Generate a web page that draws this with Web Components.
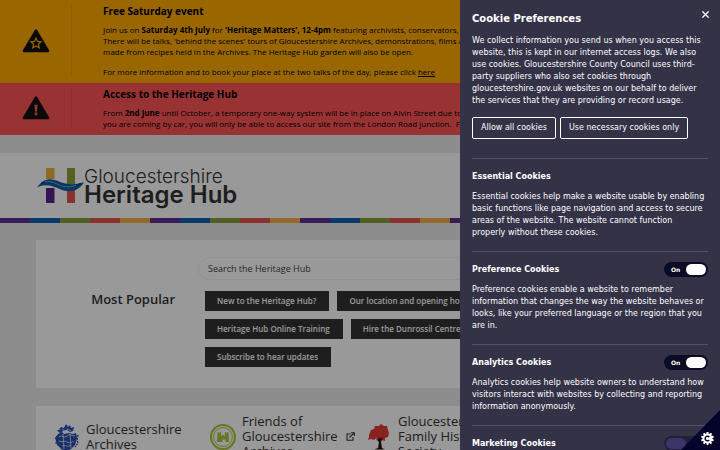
<!DOCTYPE html>
<html lang="en">
<head>
<meta charset="utf-8">
<title>Gloucestershire Heritage Hub</title>
<style>
html{height:100%;overflow:hidden}
body{margin:0;min-height:100%;background:#ececec;font-family:"Open Sans","Liberation Sans",sans-serif;color:#222}
</style>
</head>
<body>
<hub-page></hub-page>
<cookie-panel></cookie-panel>
<script>
class Base extends HTMLElement{
  connectedCallback(){
    if(this.shadowRoot)return;
    this.attachShadow({mode:'open'}).innerHTML='<style>*{box-sizing:border-box}'+this.css()+'</style>'+this.html();
  }
  css(){return ':host{display:block}'}
  html(){return '<slot></slot>'}
}

customElements.define('alert-banner',class extends Base{
  css(){return `
    :host{display:grid;grid-template-columns:72px 1fr;background:var(--tone);padding:4px 0 6px;color:#000}
    .icon{display:grid;place-items:center;border-right:1px solid rgba(0,0,0,.07)}
    svg{width:28px;height:24px;display:block}
    .text{padding-left:31px;min-width:0;overflow:hidden;white-space:nowrap}
    h2{margin:0 0 6px;font-size:10px;line-height:14px;font-weight:700}
    .body{font-size:8px;line-height:11px}`}
  html(){
    const mark=this.getAttribute('icon')==='star'
      ?'<path d="M14 9.2l1.5 3.2 3.6.4-2.7 2.4.8 3.5-3.2-1.8-3.2 1.8.8-3.5-2.7-2.4 3.6-.4z" fill="none" stroke="var(--tone)" stroke-width="1.2"/>'
      :'<path d="M12.4 8.8h3.2l-.5 6.6h-2.2zM12.6 16.6h2.8v2.6h-2.8z" fill="var(--tone)"/>';
    return `<div class="icon"><svg viewBox="0 0 28 24" aria-hidden="true"><path d="M14 1.6L26 22H2z" fill="#111" stroke="#111" stroke-width="2.6" stroke-linejoin="round"/>${mark}</svg></div>
    <div class="text"><h2>${this.getAttribute('heading')}</h2><div class="body"><slot></slot></div></div>`}
});

customElements.define('site-header',class extends Base{
  css(){return `
    :host{display:block;background:#fff;margin-top:18px}
    a{display:flex;padding:15px 36px 14px;color:#333;text-decoration:none;font-family:Inter,"Liberation Sans",sans-serif}
    svg{width:48px;height:36px;flex:none}
    .name{display:grid}
    .a{font-size:19px;line-height:18px;font-weight:300}
    .b{font-size:24px;line-height:18px;font-weight:600}
    .stripe{height:5px;background:repeating-linear-gradient(90deg,#5f2d91 0 30px,#1260b0 30px 60px,#86a03c 60px 90px,#e8584f 90px 120px,#f4b043 120px 150px)}`}
  html(){return `<a href="#home"><svg viewBox="0 0 48 36" aria-hidden="true">
    <path d="M10 0h8.5v11H10z" fill="#eeb13c"/><path d="M31 0h8v16h-8z" fill="#8aa33a"/>
    <path d="M10 20h8.5v15H10z" fill="#5a2391"/><path d="M31 22h8v13h-8z" fill="#e2564d"/>
    <path d="M1 19.5C8 9.5 15 10 23 13.5c8 3.5 16 3.5 25 .8C43 23.5 33 25 25 21.5 16 17.5 9 15.5 1 19.5z" fill="#0f5ea8"/>
    <path d="M5 15.5c8-3 14-1 20 2 7 3 14 1.5 20-2" fill="none" stroke="#0a468a" stroke-width="1.5"/>
    <path d="M9 14c7-1.5 12 2.5 18 4.3 5 1.2 9 .7 13-1" fill="none" stroke="#9cc6ea" stroke-width=".8"/>
    </svg><span class="name"><span class="a">Gloucestershire</span><span class="b">Heritage Hub</span></span></a><div class="stripe"></div>`}
});

customElements.define('tag-link',class extends Base{
  css(){return `
    :host{display:block}
    a{display:block;padding:0 13px 0 12px;background:#333;color:#fff;font-size:8px;line-height:20px;font-weight:600;text-decoration:none;white-space:nowrap}`}
  html(){return '<a href="#page"><slot></slot></a>'}
});

customElements.define('popular-card',class extends Base{
  css(){return `
    :host{display:grid;grid-template-columns:1fr 2fr 1fr;background:#fff;margin:17px 5% 0;padding:17px 0 21px}
    h2{margin:33px 0 0;padding-right:23px;text-align:right;font-size:13px;line-height:18px;font-weight:600;color:#333}
    input{display:block;width:100%;height:23px;padding:0 9px;border:1px solid #f2f2f2;border-radius:12px;background:#fff;font:9px/21px "Open Sans",sans-serif;color:#333}
    input::placeholder{color:#444;opacity:1}
    .tags{display:flex;flex-wrap:wrap;gap:8px;padding:11px 0 0 7px}`}
  html(){return `<h2>Most Popular</h2><div><input type="search" aria-label="Search the Heritage Hub" placeholder="Search the Heritage Hub"><div class="tags"><slot></slot></div></div>`}
});

const emblems={
  crest:`<g fill="#2a4fae"><path d="M12 1l2 3 2-2 1 3 3-1-1 4-3 1-3-2-4 1-3 2-3-3 4 0 0-3 3 1zM4 11l4-2 2 2 5-1 4 1 3-1 1 5-2 7-4 4-5 2-5-2-4-5-2-6z"/></g>
    <path d="M5 14c3-3 5 2 8-1s5 0 8 0M5 18c3 2 5-1 8 1s5 0 7-1M8 23c3-2 6 2 9-1M9 11l1 15M16 11l1 14M8 6l3 2 3-2 3 2" fill="none" stroke="#dfe6f8" stroke-width=".8"/>
    <path d="M2 14l2 3-2 3 3 3M24 12l-1 5 1 3-3 4M7 5l-3 3" fill="none" stroke="#2a4fae" stroke-width="1.4" stroke-dasharray="2 1"/>`,
  castle:`<circle cx="13" cy="14" r="12" fill="none" stroke="#a9c63c" stroke-width="2.2"/><circle cx="13" cy="14" r="9.4" fill="none" stroke="#a9c63c" stroke-width="1"/>
    <path d="M7.500 9h1.300v1.200h1V9h1.300v4h1v-1h1.800v1h1V9h1.300v1.200h1V9h1.300l.6 10h-3.600v-2.500h-3V19H7z" fill="#a9c63c"/>`,
  tree:`<path d="M3 12L5 7l3-1 1-3 4 0 2-2 3 2 3 0 1 4 1 3-1 4-3 1 0 3-4-1-2 1-3-3-2 2-3-1-3 1 1-3z" fill="#e63a3a"/>
    <path d="M12 17l1-3 1 2 3-2-2 5 1 6 3 1.5H8l4-1.500 1-6-4-4z" fill="#2b1512"/>`
};
customElements.define('partner-link',class extends Base{
  css(){return `
    :host{display:block;padding:0 6px;min-width:0}
    a{display:flex;align-items:center;gap:6px;height:100%;color:#333;text-decoration:none;font-size:13px;line-height:15px}
    .logo{width:26px;height:28px;flex:none}
    .label{width:95px;flex:none}
    .ext{width:9px;height:9px;flex:none;margin-left:3px}`}
  html(){
    const ext=this.hasAttribute('external')?'<svg class="ext" viewBox="0 0 9 9" aria-hidden="true"><path d="M4.500 2H1v6.300h6V5M3.500 5.500L7.800 1.200M5 .8h3.300v3.300" fill="none" stroke="#333" stroke-width="1.100"/></svg>':'';
    return `<a href="#partner"><svg class="logo" viewBox="0 0 26 28" aria-hidden="true">${emblems[this.getAttribute('emblem')]}</svg><span class="label"><slot></slot></span>${ext}</a>`}
});

customElements.define('partner-row',class extends Base{
  css(){return `:host{display:grid;grid-template-columns:repeat(4,1fr);background:#fff;margin:18px 5% 0;padding:8px 12px}`}
});

customElements.define('hub-page',class extends Base{
  css(){return `
    :host{display:block}
    a{color:inherit}
    p{margin:0}
    p+p{margin-top:9px}`}
  html(){return `
    <alert-banner style="--tone:#fa0" icon="star" heading="Free Saturday event">
      <p>Join us on <b>Saturday 4th July</b> for <b>'Heritage Matters', 12-4pm</b> featuring archivists, conservators,<br>There will be talks, 'behind the scenes' tours of Gloucestershire Archives, demonstrations, films and<br>made from recipes held in the Archives. The Heritage Hub garden will also be open.</p>
      <p>For more information and to book your place at the two talks of the day, please click <a href="#book">here</a></p>
    </alert-banner>
    <alert-banner style="--tone:#f55" icon="warning" heading="Access to the Heritage Hub">
      <p>From <b>2nd June</b> until October, a temporary one-way system will be in place on Alvin Street due to<br>you are coming by car, you will only be able to access our site from the London Road junction.&nbsp; For</p>
    </alert-banner>
    <site-header></site-header>
    <popular-card>
      <tag-link>New to the Heritage Hub?</tag-link><tag-link>Our location and opening hours</tag-link>
      <tag-link>Heritage Hub Online Training</tag-link><tag-link>Hire the Dunrossil Centre</tag-link>
      <tag-link>Subscribe to hear updates</tag-link>
    </popular-card>
    <partner-row>
      <partner-link emblem="crest">Gloucestershire Archives</partner-link>
      <partner-link emblem="castle" external>Friends of Gloucestershire Archives</partner-link>
      <partner-link emblem="tree">Gloucestershire Family History Society</partner-link>
    </partner-row>`}
});

customElements.define('toggle-switch',class extends Base{
  css(){return `
    :host{display:block}
    label{position:relative;display:flex;align-items:center;justify-content:space-between;width:44px;height:15px;padding:0 2px 0 7px;border-radius:8px;background:#0c0b24;color:#fff;font-size:6px;font-weight:700}
    i{width:20px;height:11px;border-radius:6px;background:#fff}
    input{position:absolute;inset:0;width:100%;height:100%;margin:0;opacity:0;cursor:pointer}
    :host([off]) label{justify-content:flex-start;padding:0 2px;background:#211f3b}
    :host([off]) i{background:#3b3468}`}
  html(){const off=this.hasAttribute('off');
    return `<label>${off?'':'<span>On</span>'}<i></i><input type="checkbox" role="switch" aria-label="${this.getAttribute('name')}"${off?'':' checked'}></label>`}
});

customElements.define('cookie-section',class extends Base{
  css(){return `
    :host{display:block;border-top:1px solid #50505f;padding:10px 0 12px}
    header{display:flex;justify-content:space-between;align-items:center;height:15px;margin-bottom:7px}
    h3{margin:0;font-size:8px;line-height:12px;font-weight:700}
    p{margin:0;line-height:12px}`}
  html(){const n=this.getAttribute('heading'),s=this.getAttribute('state');
    return `<header><h3>${n}</h3>${s?`<toggle-switch name="${n}"${s==='off'?' off':''}></toggle-switch>`:''}</header><p><slot></slot></p>`}
});

customElements.define('cookie-panel',class extends Base{
  css(){return `
    :host{position:fixed;inset:0;display:flex;justify-content:flex-end;background:rgba(0,0,0,.4);font-family:"DejaVu Sans",sans-serif;font-size:8px;line-height:12px;color:#fff}
    aside{width:260px;height:100%;overflow:hidden;padding:11px 12px;background:#333247}
    .top{display:flex;justify-content:space-between;align-items:flex-start}
    h2{margin:0 0 9px;font-size:10px;line-height:15px}
    p{margin:0}
    button{font:inherit;color:inherit;background:none;border:0;padding:0;cursor:pointer}
    .close{width:9px;height:7px;margin-right:-3px}
    .close svg{display:block;width:7px;height:7px}
    .actions{display:flex;gap:4px;margin:10px 0 19px}
    .actions button{height:22px;padding:0 8px;border:1px solid #fff;border-radius:2px;white-space:nowrap}
    .corner{position:absolute;right:0;bottom:0;width:39px;height:40px;background:#03032b;clip-path:polygon(100% 0,100% 100%,0 100%)}
    .corner svg{position:absolute;right:6px;bottom:5px;width:13px;height:13px}`}
  html(){
    let teeth='';
    for(let i=0;i<10;i++)teeth+=`<rect x="5.500" y="0" width="2" height="3" rx=".4" transform="rotate(${i*36} 6.500 6.500)"/>`;
    return `<aside role="dialog" aria-label="Cookie Preferences">
    <div class="top"><h2>Cookie Preferences</h2><button class="close" aria-label="Close"><svg viewBox="0 0 7 7"><path d="M.4.4l6.200 6.200M6.600.4L.4 6.600" stroke="#fff" stroke-width="1.300"/></svg></button></div>
    <p>We collect information you send us when you access this website, this is kept in our internet access logs. We also use cookies. Gloucestershire County Council uses third-party suppliers who also set cookies through gloucestershire.gov.uk websites on our behalf to deliver the services that they are providing or record usage.</p>
    <div class="actions"><button>Allow all cookies</button><button>Use necessary cookies only</button></div>
    <cookie-section heading="Essential Cookies">Essential cookies help make a website usable by enabling basic functions like page navigation and access to secure areas of the website. The website cannot function properly without these cookies.</cookie-section>
    <cookie-section heading="Preference Cookies" state="on">Preference cookies enable a website to remember information that changes the way the website behaves or looks, like your preferred language or the region that you are in.</cookie-section>
    <cookie-section heading="Analytics Cookies" state="on">Analytics cookies help website owners to understand how visitors interact with websites by collecting and reporting information anonymously.</cookie-section>
    <cookie-section heading="Marketing Cookies" state="off"></cookie-section>
    </aside>
    <button class="corner" aria-label="Cookie settings"><svg viewBox="0 0 13 13"><g fill="#fff">${teeth}<circle cx="6.500" cy="6.500" r="5"/></g><path d="M8.300 5.100a2.300 2.300 0 1 0 0 2.800" fill="none" stroke="#03032b" stroke-width="1.500"/></svg></button>`}
});
</script>
</body>
</html>
